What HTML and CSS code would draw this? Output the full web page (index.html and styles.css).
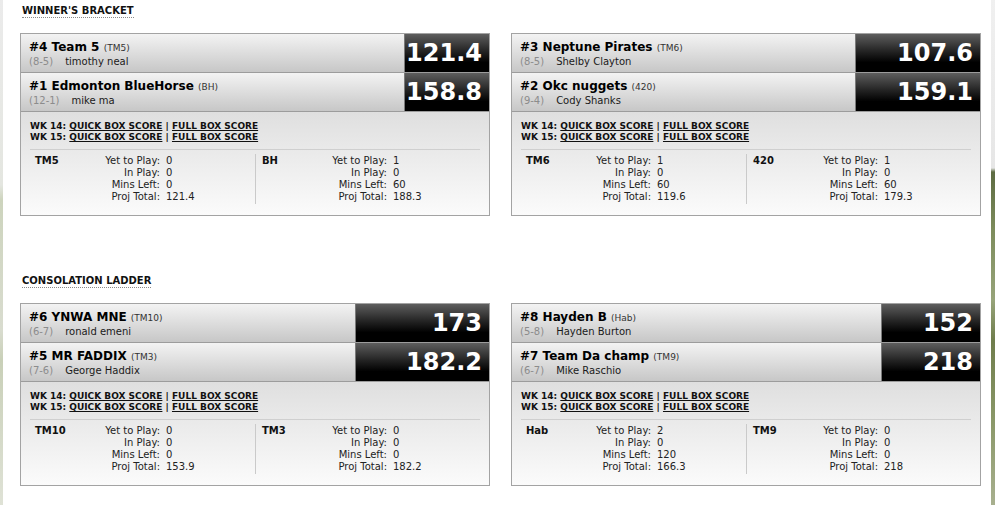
FILE: index.html
```html
<!doctype html>
<html lang="en">
    <head>
        <meta charset="UTF-8" />
        <title>Playoff Bracket</title>
        <link rel="stylesheet" href="styles.css">
    </head>
    <body>
        <div class="brackets">

            <section class="bracket">
                <h2 class="bracket-title"><span>WINNER'S BRACKET</span></h2>
                <div class="matchups">

                    <div class="matchup" style="--score-w: 85px">
                        <div class="team-row">
                            <div class="team-info">
                                <div class="team-name">#4 Team 5 <small>(TM5)</small></div>
                                <div class="team-owner"><span class="record">(8-5)</span>timothy neal</div>
                            </div>
                            <div class="team-score">121.4</div>
                        </div>
                        <div class="team-row">
                            <div class="team-info">
                                <div class="team-name">#1 Edmonton BlueHorse <small>(BH)</small></div>
                                <div class="team-owner"><span class="record">(12-1)</span>mike ma</div>
                            </div>
                            <div class="team-score">158.8</div>
                        </div>
                        <div class="matchup-body">
                            <div class="box-links">
                                <div>WK 14: <a href="#">QUICK BOX SCORE</a> | <a href="#">FULL BOX SCORE</a></div>
                                <div>WK 15: <a href="#">QUICK BOX SCORE</a> | <a href="#">FULL BOX SCORE</a></div>
                            </div>
                            <div class="stats">
                                <div class="stats-half">
                                    <div class="stats-abbr">TM5</div>
                                    <div class="stats-list">
                                        <span>Yet to Play:</span><span>0</span>
                                        <span>In Play:</span><span>0</span>
                                        <span>Mins Left:</span><span>0</span>
                                        <span>Proj Total:</span><span>121.4</span>
                                    </div>
                                </div>
                                <div class="stats-half">
                                    <div class="stats-abbr">BH</div>
                                    <div class="stats-list">
                                        <span>Yet to Play:</span><span>1</span>
                                        <span>In Play:</span><span>0</span>
                                        <span>Mins Left:</span><span>60</span>
                                        <span>Proj Total:</span><span>188.3</span>
                                    </div>
                                </div>
                            </div>
                        </div>
                    </div>

                    <div class="matchup" style="--score-w: 125px">
                        <div class="team-row">
                            <div class="team-info">
                                <div class="team-name">#3 Neptune Pirates <small>(TM6)</small></div>
                                <div class="team-owner"><span class="record">(8-5)</span>Shelby Clayton</div>
                            </div>
                            <div class="team-score">107.6</div>
                        </div>
                        <div class="team-row">
                            <div class="team-info">
                                <div class="team-name">#2 Okc nuggets <small>(420)</small></div>
                                <div class="team-owner"><span class="record">(9-4)</span>Cody Shanks</div>
                            </div>
                            <div class="team-score">159.1</div>
                        </div>
                        <div class="matchup-body">
                            <div class="box-links">
                                <div>WK 14: <a href="#">QUICK BOX SCORE</a> | <a href="#">FULL BOX SCORE</a></div>
                                <div>WK 15: <a href="#">QUICK BOX SCORE</a> | <a href="#">FULL BOX SCORE</a></div>
                            </div>
                            <div class="stats">
                                <div class="stats-half">
                                    <div class="stats-abbr">TM6</div>
                                    <div class="stats-list">
                                        <span>Yet to Play:</span><span>1</span>
                                        <span>In Play:</span><span>0</span>
                                        <span>Mins Left:</span><span>60</span>
                                        <span>Proj Total:</span><span>119.6</span>
                                    </div>
                                </div>
                                <div class="stats-half">
                                    <div class="stats-abbr">420</div>
                                    <div class="stats-list">
                                        <span>Yet to Play:</span><span>1</span>
                                        <span>In Play:</span><span>0</span>
                                        <span>Mins Left:</span><span>60</span>
                                        <span>Proj Total:</span><span>179.3</span>
                                    </div>
                                </div>
                            </div>
                        </div>
                    </div>

                </div>
            </section>

            <section class="bracket">
                <h2 class="bracket-title"><span>CONSOLATION LADDER</span></h2>
                <div class="matchups">

                    <div class="matchup" style="--score-w: 134px">
                        <div class="team-row">
                            <div class="team-info">
                                <div class="team-name">#6 YNWA MNE <small>(TM10)</small></div>
                                <div class="team-owner"><span class="record">(6-7)</span>ronald emeni</div>
                            </div>
                            <div class="team-score">173</div>
                        </div>
                        <div class="team-row">
                            <div class="team-info">
                                <div class="team-name">#5 MR FADDIX <small>(TM3)</small></div>
                                <div class="team-owner"><span class="record">(7-6)</span>George Haddix</div>
                            </div>
                            <div class="team-score">182.2</div>
                        </div>
                        <div class="matchup-body">
                            <div class="box-links">
                                <div>WK 14: <a href="#">QUICK BOX SCORE</a> | <a href="#">FULL BOX SCORE</a></div>
                                <div>WK 15: <a href="#">QUICK BOX SCORE</a> | <a href="#">FULL BOX SCORE</a></div>
                            </div>
                            <div class="stats">
                                <div class="stats-half">
                                    <div class="stats-abbr">TM10</div>
                                    <div class="stats-list">
                                        <span>Yet to Play:</span><span>0</span>
                                        <span>In Play:</span><span>0</span>
                                        <span>Mins Left:</span><span>0</span>
                                        <span>Proj Total:</span><span>153.9</span>
                                    </div>
                                </div>
                                <div class="stats-half">
                                    <div class="stats-abbr">TM3</div>
                                    <div class="stats-list">
                                        <span>Yet to Play:</span><span>0</span>
                                        <span>In Play:</span><span>0</span>
                                        <span>Mins Left:</span><span>0</span>
                                        <span>Proj Total:</span><span>182.2</span>
                                    </div>
                                </div>
                            </div>
                        </div>
                    </div>

                    <div class="matchup" style="--score-w: 99px">
                        <div class="team-row">
                            <div class="team-info">
                                <div class="team-name">#8 Hayden B <small>(Hab)</small></div>
                                <div class="team-owner"><span class="record">(5-8)</span>Hayden Burton</div>
                            </div>
                            <div class="team-score">152</div>
                        </div>
                        <div class="team-row">
                            <div class="team-info">
                                <div class="team-name">#7 Team Da champ <small>(TM9)</small></div>
                                <div class="team-owner"><span class="record">(6-7)</span>Mike Raschio</div>
                            </div>
                            <div class="team-score">218</div>
                        </div>
                        <div class="matchup-body">
                            <div class="box-links">
                                <div>WK 14: <a href="#">QUICK BOX SCORE</a> | <a href="#">FULL BOX SCORE</a></div>
                                <div>WK 15: <a href="#">QUICK BOX SCORE</a> | <a href="#">FULL BOX SCORE</a></div>
                            </div>
                            <div class="stats">
                                <div class="stats-half">
                                    <div class="stats-abbr">Hab</div>
                                    <div class="stats-list">
                                        <span>Yet to Play:</span><span>2</span>
                                        <span>In Play:</span><span>0</span>
                                        <span>Mins Left:</span><span>120</span>
                                        <span>Proj Total:</span><span>166.3</span>
                                    </div>
                                </div>
                                <div class="stats-half">
                                    <div class="stats-abbr">TM9</div>
                                    <div class="stats-list">
                                        <span>Yet to Play:</span><span>0</span>
                                        <span>In Play:</span><span>0</span>
                                        <span>Mins Left:</span><span>0</span>
                                        <span>Proj Total:</span><span>218</span>
                                    </div>
                                </div>
                            </div>
                        </div>
                    </div>

                </div>
            </section>

        </div>
    </body>
</html>
```
FILE: styles.css
```css
* {
    margin: 0;
    padding: 0;
    box-sizing: border-box;
}

body {
    font-family: "DejaVu Sans", Verdana, sans-serif;
    font-size: 10px;
    color: #111;
    height: 505px;
    overflow: hidden;
    /* page background peeking out at both edges */
    background:
        linear-gradient(#ebebeb 0, #e4e6e0 185px, #cdd4bd 200px, #d9dccf 330px, #c9d0b8 360px, #dfe2d6 505px) left top / 3px 100% no-repeat,
        linear-gradient(#f0f0f0 0, #e6e6e6 168px, #5d6b42 172px, #7d8c5c 230px, #97a47a 300px, #6f7d4c 340px, #8a9868 420px, #a8b08f 505px) right top / 4px 100% no-repeat,
        #fff;
}

.brackets {
    padding-left: 20px;
}

.bracket {
    padding-top: 5px;
}

.bracket + .bracket {
    margin-top: 54px;
}

.bracket-title {
    font-size: 10px;
    font-weight: bold;
    line-height: 12px;
    margin: 0 0 15px 2px;
    color: #111;
}

.bracket-title span {
    display: inline-block;
    border-bottom: 1px dotted #8a8a8a;
}

.matchups {
    display: grid;
    grid-template-columns: 470px 470px;
    column-gap: 21px;
}

.matchup {
    border: 1px solid #a3a3a3;
    background: #fff;
}

.team-row {
    display: flex;
    height: 39px;
    border-bottom: 1px solid #9c9c9c;
}

.team-info {
    flex: 1;
    padding: 6px 8px 0;
    background: linear-gradient(#f3f3f3, #c7c7c7);
}

.team-name {
    font-size: 12px;
    font-weight: bold;
    line-height: 14px;
    color: #000;
}

.team-name small {
    font-size: 9px;
    font-weight: normal;
    color: #333;
}

.team-owner {
    font-size: 10px;
    line-height: 12px;
    margin-top: 1px;
    color: #1a1a1a;
}

.record {
    color: #8c8c8c;
    margin-right: 12px;
}

.team-score {
    width: var(--score-w);
    display: flex;
    align-items: center;
    justify-content: flex-end;
    padding-right: 7px;
    border-left: 1px solid #7a7a7a;
    background: linear-gradient(#5e5e5e 0%, #242424 45%, #000 75%);
    color: #fff;
    font-size: 24px;
    font-weight: bold;
}

.matchup-body {
    padding: 9px 9px 11px;
    background: linear-gradient(#dfdfdf, #fbfbfb);
}

.box-links {
    font-size: 9px;
    font-weight: bold;
    line-height: 11px;
    color: #111;
    padding-bottom: 6px;
    border-bottom: 1px solid #cfcfcf;
}

.box-links a {
    color: #111;
    text-decoration: underline;
}

.stats {
    display: grid;
    grid-template-columns: 1fr 1fr;
    margin-top: 4px;
}

.stats-half {
    display: flex;
    padding: 1px 0 1px 5px;
    line-height: 12px;
    color: #222;
}

.stats-half + .stats-half {
    border-left: 1px solid #cacaca;
    padding-left: 6px;
}

.stats-abbr {
    width: 65px;
    font-weight: bold;
    color: #111;
}

.stats-list {
    display: grid;
    grid-template-columns: 60px auto;
    column-gap: 6px;
}

.stats-list span:nth-child(odd) {
    text-align: right;
}
```
